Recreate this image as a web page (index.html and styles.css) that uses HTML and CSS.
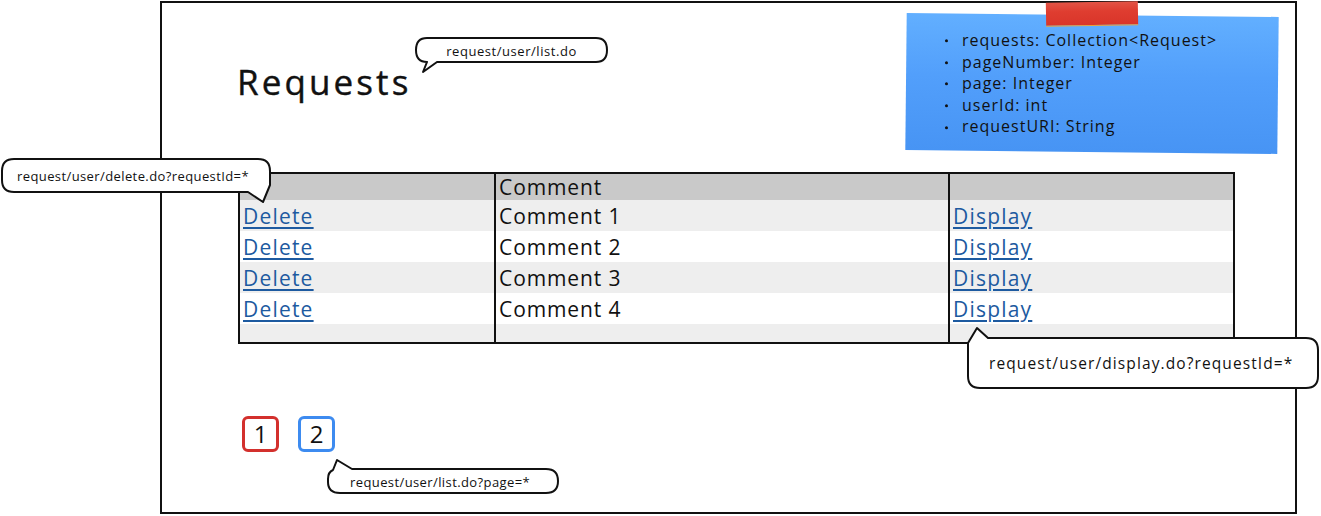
FILE: index.html
```html
<!DOCTYPE html>
<html lang="en">
<head>
<meta charset="utf-8">
<title>Requests</title>
<link rel="stylesheet" href="styles.css">
</head>
<body>
<div class="window">
  <h1 class="title">Requests</h1>

  <div class="grid">
    <div class="cell head"></div>
    <div class="cell head sep">Comment</div>
    <div class="cell head sep"></div>

    <div class="cell alt"><a href="#">Delete</a></div>
    <div class="cell alt sep">Comment 1</div>
    <div class="cell alt sep"><a href="#">Display</a></div>

    <div class="cell"><a href="#">Delete</a></div>
    <div class="cell sep">Comment 2</div>
    <div class="cell sep"><a href="#">Display</a></div>

    <div class="cell alt"><a href="#">Delete</a></div>
    <div class="cell alt sep">Comment 3</div>
    <div class="cell alt sep"><a href="#">Display</a></div>

    <div class="cell"><a href="#">Delete</a></div>
    <div class="cell sep">Comment 4</div>
    <div class="cell sep"><a href="#">Display</a></div>

    <div class="cell alt last"></div>
    <div class="cell alt last sep"></div>
    <div class="cell alt last sep"></div>
  </div>

  <div class="pager">
    <span class="page page-red">1</span>
    <span class="page page-blue">2</span>
  </div>

  <div class="note">
    <ul class="note-list">
      <li>requests: Collection&lt;Request&gt;</li>
      <li>pageNumber: Integer</li>
      <li>page: Integer</li>
      <li>userId: int</li>
      <li>requestURI: String</li>
    </ul>
  </div>
  <div class="tape"></div>
</div>

<div class="bubble bubble-list">
  <svg class="bubble-shape" width="193" height="26" viewBox="0 0 193 26">
    <path d="M12 1 H181 Q192 1 192 13 Q192 25 181 25 H22 L8 35 L12 25 H12 Q1 25 1 13 Q1 1 12 1 Z"/>
  </svg>
  <span class="bubble-text">request/user/list.do</span>
</div>

<div class="bubble bubble-delete">
  <svg class="bubble-shape" width="270" height="35" viewBox="0 0 270 35">
    <path d="M13 1 H257 Q269 1 269 13 V27 L262 44 L247 34 H13 Q1 34 1 22 V13 Q1 1 13 1 Z"/>
  </svg>
  <span class="bubble-text">request/user/delete.do?requestId=*</span>
</div>

<div class="bubble bubble-display">
  <svg class="bubble-shape" width="352" height="52" viewBox="0 0 352 52">
    <path d="M21 1 H339 Q351 1 351 13 V39 Q351 51 339 51 H13 Q1 51 1 39 V6 L10 -9 L21 1 Z"/>
  </svg>
  <span class="bubble-text">request/user/display.do?requestId=*</span>
</div>

<div class="bubble bubble-page">
  <svg class="bubble-shape" width="232" height="26" viewBox="0 0 232 26">
    <path d="M25 1 H219 Q231 1 231 13 Q231 25 219 25 H13 Q1 25 1 14 V11 Q1 4 6 2 L10 -8 L25 1 Z"/>
  </svg>
  <span class="bubble-text">request/user/list.do?page=*</span>
</div>
</body>
</html>
```

FILE: styles.css
```css
* {
  box-sizing: border-box;
}

html, body {
  margin: 0;
  padding: 0;
  background: #ffffff;
}

body {
  font-family: "Open Sans", "Liberation Sans", sans-serif;
  color: #111111;
  width: 1321px;
  height: 516px;
  overflow: hidden;
}

.window {
  position: relative;
  margin: 1px 0 0 160px;
  width: 1137px;
  height: 513px;
  border: 2px solid #111111;
  padding: 0 0 0 76px;
}

.title {
  margin: 59px 0 0 -1px;
  font-size: 35px;
  line-height: 40px;
  font-weight: 500;
  letter-spacing: 3.1px;
  -webkit-text-stroke: 0.4px #111111;
}

.grid {
  margin-top: 70px;
  width: 997px;
  display: grid;
  grid-template-columns: 254px 454px 285px;
  grid-template-rows: 26px 31px 31px 31px 31px 18px;
  border: 2px solid #111111;
}

.cell {
  display: flex;
  align-items: center;
  padding-left: 3px;
  font-size: 21px;
  letter-spacing: 0.9px;
  background: #ffffff;
  white-space: nowrap;
}

.cell.sep {
  border-left: 2px solid #111111;
}

.cell.head {
  background: #c9c9c9;
}

.cell.alt {
  background: #eeeeee;
}

.cell a {
  color: #1d5aa0;
  letter-spacing: 1.2px;
  text-decoration: underline;
  text-decoration-thickness: 2px;
  text-underline-offset: 3px;
}

.pager {
  margin-top: 72px;
  padding-left: 4px;
  display: flex;
  gap: 19px;
}

.page {
  width: 37px;
  height: 36px;
  border: 3px solid;
  border-radius: 6px;
  display: flex;
  align-items: center;
  justify-content: center;
  font-size: 24px;
  line-height: 1;
}

.page-red {
  border-color: #d3302d;
}

.page-blue {
  border-color: #3d8bf0;
}

.note {
  position: absolute;
  left: 744px;
  top: 12px;
  width: 372px;
  height: 137px;
  background: linear-gradient(180deg, #62afff 0%, #529ffb 45%, #4794f4 100%);
  transform: rotate(0.6deg);
  padding: 15px 0 0 39px;
}

.note-list {
  list-style: none;
  margin: 0;
  padding: 0;
  font-size: 16px;
  line-height: 21.6px;
  letter-spacing: 1px;
  transform: rotate(-0.6deg);
}

.note-list li {
  display: flex;
  align-items: center;
  gap: 14px;
}

.note-list li::before {
  content: "";
  width: 3px;
  height: 3px;
  border-radius: 50%;
  background: #111111;
}

.tape {
  position: absolute;
  left: 884px;
  top: -1px;
  width: 92px;
  height: 24px;
  background: linear-gradient(180deg, #e25446 0%, #df3d30 40%, #d9352a 100%);
  transform: rotate(-1deg);
  border-bottom: 1px solid #e8a13a;
}

.bubble {
  position: absolute;
  display: flex;
  align-items: center;
}

.bubble-shape {
  position: absolute;
  left: 0;
  top: 0;
  overflow: visible;
}

.bubble-shape path {
  fill: #ffffff;
  stroke: #111111;
  stroke-width: 2;
  stroke-linejoin: round;
}

.bubble-text {
  position: relative;
  font-size: 13px;
  letter-spacing: 0.4px;
  white-space: nowrap;
}

.bubble-list {
  left: 415px;
  top: 37px;
  width: 193px;
  height: 26px;
  justify-content: center;
}

.bubble-list .bubble-text {
  top: 1px;
  letter-spacing: 0.55px;
}

.bubble-delete {
  left: 1px;
  top: 158px;
  width: 270px;
  height: 35px;
  padding-left: 16px;
}

.bubble-display {
  left: 967px;
  top: 337px;
  width: 352px;
  height: 52px;
  padding-left: 22px;
}

.bubble-display .bubble-text {
  font-size: 15.5px;
  letter-spacing: 1.1px;
}

.bubble-page {
  left: 327px;
  top: 468px;
  width: 232px;
  height: 26px;
  padding-left: 23px;
}

.bubble-page .bubble-text {
  top: 1px;
}
```
